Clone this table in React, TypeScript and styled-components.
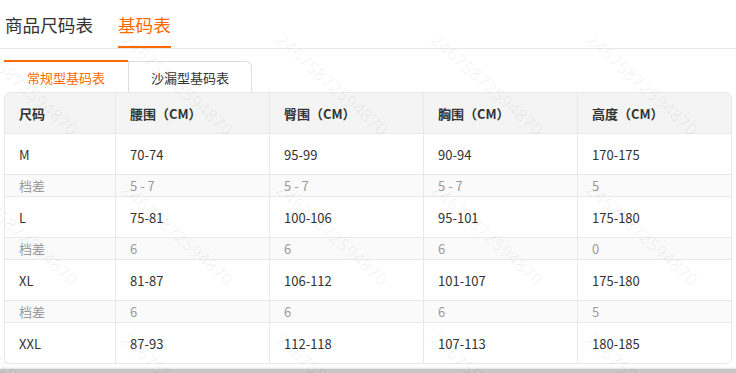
import React from "react";
import styled, { createGlobalStyle } from "styled-components";

const Global = createGlobalStyle`
  html, body { margin: 0; padding: 0; background: #fff; }
  body {
    font-family: "Noto Sans CJK SC", "Noto Sans", sans-serif;
    color: #333;
    overflow: hidden;
  }
`;

const Page = styled.div`
  position: relative;
  width: 736px;
  height: 373px;
  overflow: hidden;
  display: flex;
  flex-direction: column;
`;

const TopTabs = styled.div`
  display: flex;
  align-items: stretch;
  gap: 25px;
  height: 48px;
  padding-left: 5px;
  border-bottom: 1px solid #e8e8e8;
  box-sizing: content-box;
`;

const TopTab = styled.div<{ $active?: boolean }>`
  display: flex;
  align-items: center;
  font-size: 17.6px;
  line-height: 1;
  padding-top: 1px;
  color: ${(p) => (p.$active ? "#ff6a00" : "#333")};
  box-shadow: ${(p) => (p.$active ? "inset 0 -2px 0 #ff6a00" : "none")};
`;

const SubTabs = styled.div`
  display: flex;
  margin: 11px 0 0 4px;
  height: 32px;
`;

const SubTab = styled.div<{ $active?: boolean }>`
  width: 124px;
  box-sizing: border-box;
  display: flex;
  align-items: center;
  justify-content: center;
  font-size: 13px;
  color: ${(p) => (p.$active ? "#ff6a00" : "#333")};
  border-top: ${(p) => (p.$active ? "2px solid #ff6a00" : "1px solid #dcdcdc")};
  border-right: ${(p) => (p.$active ? "none" : "1px solid #dcdcdc")};
  border-left: ${(p) => (p.$active ? "none" : "1px solid #dcdcdc")};
  border-radius: ${(p) => (p.$active ? "0" : "0 6px 0 0")};
  margin-top: ${(p) => (p.$active ? "0" : "1px")};
  background: #fff;
`;

const TableWrap = styled.div`
  margin: 0 4px;
  border: 1px solid #e8e8e8;
  border-radius: 6px;
  overflow: hidden;
  width: 728px;
  box-sizing: border-box;
`;

const Table = styled.table`
  width: 100%;
  border-collapse: separate;
  border-spacing: 0;
  table-layout: fixed;
  font-size: 13px;
  & tr + tr > td {
    border-top: 1px solid #e8e8e8;
  }
`;

const Row = styled.tr<{ $kind: "head" | "main" | "diff" }>`
  background: ${(p) =>
    p.$kind === "head" ? "#f4f4f4" : p.$kind === "diff" ? "#fafafa" : "#fff"};
  color: ${(p) => (p.$kind === "diff" ? "#9a9a9a" : "#333")};
  font-weight: ${(p) => (p.$kind === "head" ? 700 : 400)};
  & > td {
    height: ${(p) => (p.$kind === "diff" ? "21px" : "40px")};
  }
`;

const Cell = styled.td`
  padding: 0 0 0 14px;
  box-sizing: content-box;
  text-align: left;
  vertical-align: middle;
  white-space: nowrap;
  line-height: 1;
  & + & {
    border-left: 1px solid #e8e8e8;
  }
`;

const BottomBar = styled.div`
  margin-top: auto;
  height: 4px;
  background: #c6c6c6;
  box-shadow: 0 -1px 2px rgba(0, 0, 0, 0.12);
`;

const Watermarks = styled.div`
  position: absolute;
  inset: 0;
  pointer-events: none;
  overflow: hidden;
`;

const Mark = styled.span`
  position: absolute;
  font-family: "Open Sans", sans-serif;
  font-size: 17px;
  letter-spacing: 0.5px;
  color: rgba(0, 0, 0, 0.06);
  transform: rotate(42deg);
  transform-origin: 0 0;
  white-space: nowrap;
`;

const widths = [110, 154, 154, 154, 156];

const header = ["尺码", "腰围（CM）", "臀围（CM）", "胸围（CM）", "高度（CM）"];

const rows: { kind: "main" | "diff"; cells: string[] }[] = [
  { kind: "main", cells: ["M", "70-74", "95-99", "90-94", "170-175"] },
  { kind: "diff", cells: ["档差", "5 - 7", "5 - 7", "5 - 7", "5"] },
  { kind: "main", cells: ["L", "75-81", "100-106", "95-101", "175-180"] },
  { kind: "diff", cells: ["档差", "6", "6", "6", "0"] },
  { kind: "main", cells: ["XL", "81-87", "106-112", "101-107", "175-180"] },
  { kind: "diff", cells: ["档差", "6", "6", "6", "5"] },
  { kind: "main", cells: ["XXL", "87-93", "112-118", "107-113", "180-185"] },
];

const markPositions: { x: number; y: number }[] = [];
for (let r = -1; r < 3; r++) {
  for (let c = -1; c < 5; c++) {
    markPositions.push({ x: 132 + c * 155, y: 28 + r * 150 });
  }
}

export default function App() {
  return (
    <Page>
      <Global />
      <TopTabs>
        <TopTab>商品尺码表</TopTab>
        <TopTab $active>基码表</TopTab>
      </TopTabs>
      <SubTabs>
        <SubTab $active>常规型基码表</SubTab>
        <SubTab>沙漏型基码表</SubTab>
      </SubTabs>
      <TableWrap>
        <Table>
          <colgroup>
            {widths.map((w, i) => (
              <col key={i} style={{ width: w }} />
            ))}
          </colgroup>
          <tbody>
            <Row $kind="head">
              {header.map((h) => (
                <Cell key={h}>{h}</Cell>
              ))}
            </Row>
            {rows.map((r, i) => (
              <Row key={i} $kind={r.kind}>
                {r.cells.map((c, j) => (
                  <Cell key={j}>{c}</Cell>
                ))}
              </Row>
            ))}
          </tbody>
        </Table>
      </TableWrap>
      <BottomBar />
      <Watermarks>
        {markPositions.map((p, i) => (
          <Mark key={i} style={{ left: p.x, top: p.y }}>
            24675872594870
          </Mark>
        ))}
      </Watermarks>
    </Page>
  );
}
